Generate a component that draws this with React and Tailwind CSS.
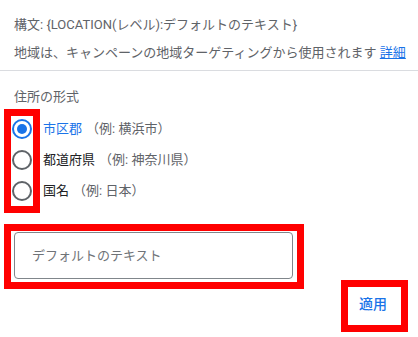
import { useState } from 'react'

const OPTIONS = [
  { id: 'city',    label: '市区郡',   example: '（例: 横浜市）' },
  { id: 'pref',    label: '都道府県', example: '（例: 神奈川県）' },
  { id: 'country', label: '国名',     example: '（例: 日本）' },
]

function Radio({ checked }) {
  return (
    <span
      className={`w-[20px] h-[20px] rounded-full border-2 flex items-center justify-center shrink-0 ${
        checked ? 'border-[#1a73e8]' : 'border-[#5f6368]'
      }`}
    >
      {checked && <span className="w-[10px] h-[10px] rounded-full bg-[#1a73e8]" />}
    </span>
  )
}

export default function App() {
  const [format, setFormat] = useState('city')
  const [text, setText] = useState('')

  return (
    <div
      className="relative w-[418px] h-[337px] bg-white overflow-hidden"
      style={{ fontFamily: 'Roboto, "Noto Sans CJK JP", sans-serif' }}
    >
      {/* 構文と説明 */}
      <div className="pt-[16px] pb-[8px] px-[14px] text-[13px] leading-[18px] text-[#5f6368]">
        <p>構文: {'{LOCATION(レベル):デフォルトのテキスト}'}</p>
        <p className="mt-[10px] whitespace-nowrap">
          地域は、キャンペーンの地域ターゲティングから使用されます{' '}
          <a href="#" className="text-[#1a73e8] underline">詳細</a>
        </p>
      </div>
      <div className="h-px bg-[#dadce0]" />

      {/* 住所の形式 */}
      <p className="mt-[17px] px-[14px] text-[13px] leading-[18px] text-[#5f6368]">住所の形式</p>
      <div className="mt-[7px] pl-[12px]">
        {OPTIONS.map(o => (
          <button
            key={o.id}
            onClick={() => setFormat(o.id)}
            className="h-[31px] flex items-center gap-[11px] text-[13px]"
          >
            <Radio checked={format === o.id} />
            <span>
              <span className={format === o.id ? 'text-[#1a73e8]' : 'text-[#202124]'}>{o.label}</span>
              <span className="ml-[4px] text-[#5f6368]">{o.example}</span>
            </span>
          </button>
        ))}
      </div>

      {/* デフォルトのテキスト */}
      <div className="mt-[26px] px-[14px]">
        <input
          value={text}
          onChange={e => setText(e.target.value)}
          placeholder="デフォルトのテキスト"
          className="w-[279px] h-[47px] border border-[#80868b] rounded-[4px] pl-[17px] text-[13px] text-[#202124] placeholder-[#6f7378] focus:outline-none"
        />
      </div>

      <div className="flex justify-end pr-[31px] mt-[16px]">
        <button className="text-[14px] font-medium text-[#1a73e8] leading-[18px]">適用</button>
      </div>

      {/* 赤枠の注釈 */}
      <div className="absolute left-[4px] top-[109px] w-[36px] h-[104px] border-[7px] border-[#ff0000] pointer-events-none" />
      <div className="absolute left-[4px] top-[224px] w-[300px] h-[65px] border-[7px] border-[#ff0000] pointer-events-none" />
      <div className="absolute left-[341px] top-[280px] w-[67px] h-[52px] border-[7px] border-[#ff0000] pointer-events-none" />
    </div>
  )
}
